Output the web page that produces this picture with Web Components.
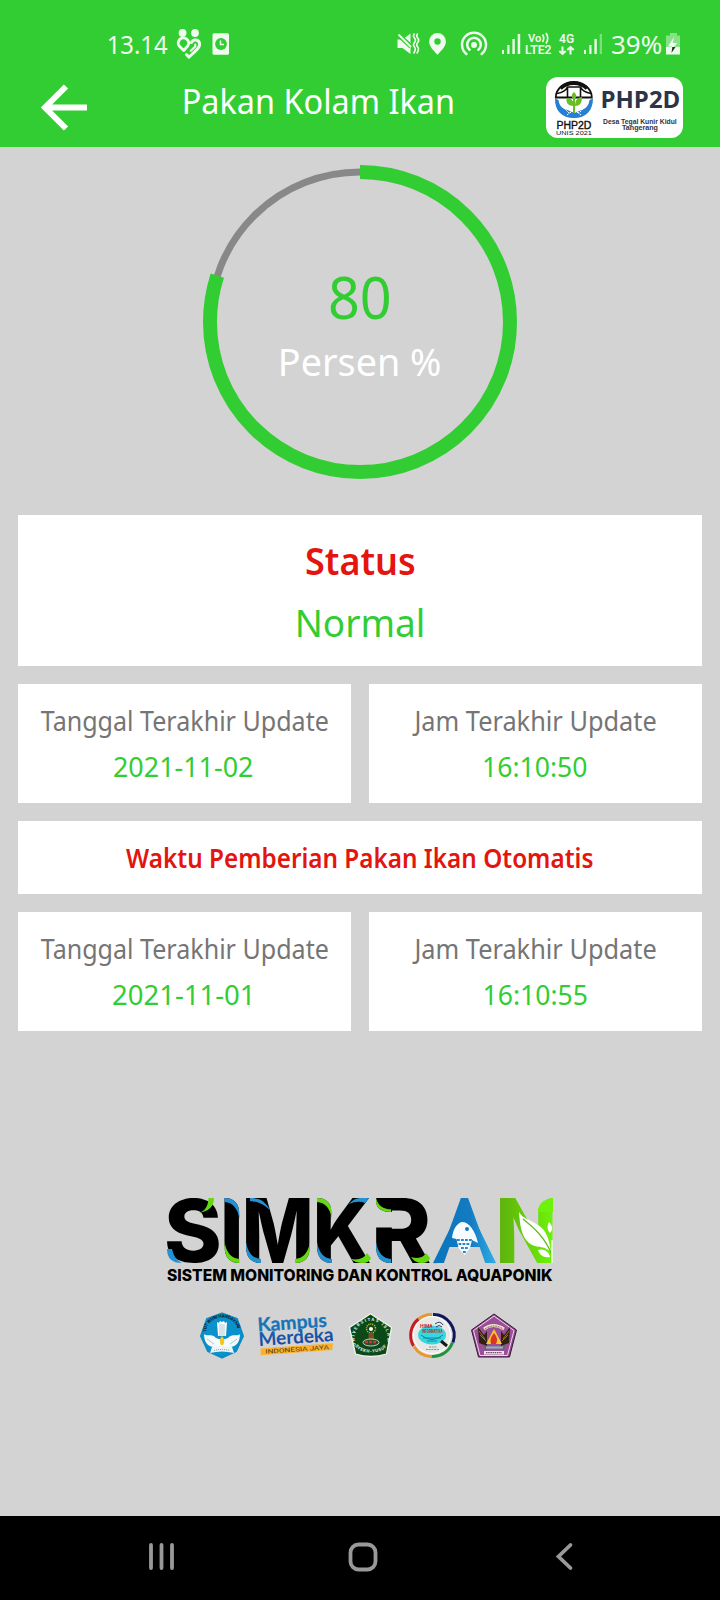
<!DOCTYPE html>
<html lang="id">
<head>
<meta charset="utf-8">
<title>Pakan Kolam Ikan</title>
<style>
html,body{margin:0;padding:0;background:#d3d3d3}
body{font-family:"Noto Sans","Open Sans",sans-serif;width:720px;height:1600px;overflow:hidden}
</style>
</head>
<body>
<phone-screen>
  <status-bar slot="top"></status-bar>
  <app-header slot="top"><fit-label size="35" line="44" ink="268">Pakan Kolam Ikan</fit-label></app-header>
  <percent-gauge value="80">
    <fit-label slot="value" size="57.5" line="66" ink="60">80</fit-label>
    <fit-label slot="unit" size="38" line="52" ink="159" tone="white">Persen %</fit-label>
  </percent-gauge>
  <info-grid>
    <info-card kind="status"><fit-label size="38" line="52" ink="109" tone="red" weight="600">Status</fit-label><fit-label size="38" line="52" ink="125" tone="green">Normal</fit-label></info-card>
    <info-card><fit-label size="27" line="36" ink="287" tone="grey">Tanggal Terakhir Update</fit-label><fit-label size="27" line="36" ink="139" tone="green" shift="-1">2021-11-02</fit-label></info-card>
    <info-card><fit-label size="27" line="36" ink="244" tone="grey" shift="-1.5">Jam Terakhir Update</fit-label><fit-label size="27" line="36" ink="103" tone="green">16:10:50</fit-label></info-card>
    <info-card kind="banner"><fit-label size="27" line="36" ink="467" tone="red" weight="600">Waktu Pemberian Pakan Ikan Otomatis</fit-label></info-card>
    <info-card><fit-label size="27" line="36" ink="287" tone="grey">Tanggal Terakhir Update</fit-label><fit-label size="27" line="36" ink="137" tone="green" shift="-3">2021-11-01</fit-label></info-card>
    <info-card><fit-label size="27" line="36" ink="244" tone="grey" shift="-1.5">Jam Terakhir Update</fit-label><fit-label size="27" line="36" ink="102" tone="green">16:10:55</fit-label></info-card>
  </info-grid>
  <brand-mark></brand-mark>
  <partner-logos></partner-logos>
  <nav-bar slot="bottom"></nav-bar>
</phone-screen>
<script>
const ctx = document.createElement('canvas').getContext('2d');
function inkOf(el, text){
  const s = getComputedStyle(el);
  ctx.font = `${s.fontWeight} ${s.fontSize} ${s.fontFamily}`;
  const m = ctx.measureText(text);
  return {left:-m.actualBoundingBoxLeft, right:m.actualBoundingBoxRight, width:m.width};
}
/* Stretches every <text data-fit="x0 x1" data-y="baseline"> so its ink spans x0..x1. */
function fitTexts(root){
  root.querySelectorAll('text[data-fit]').forEach(t => {
    const [a,b] = t.dataset.fit.split(' ').map(Number);
    const k = inkOf(t, t.textContent), s = (b-a)/(k.right-k.left);
    t.setAttribute('transform', `translate(${a-k.left*s} ${t.dataset.y}) scale(${s} ${t.dataset.sy||1})`);
  });
}
function define(name, html, ready){
  customElements.define(name, class extends HTMLElement{
    constructor(){ super(); this.attachShadow({mode:'open'}).innerHTML = html; }
    connectedCallback(){ if(ready) ready.call(this); fitTexts(this.shadowRoot); }
  });
}

define('phone-screen', `<style>
:host{display:flex;flex-direction:column;width:720px;height:1600px;background:#d3d3d3}
header{height:147px;background:#32cd32;display:flex;flex-direction:column}
main{flex:1;display:flex;flex-direction:column;align-items:center}
</style><header><slot name="top"></slot></header><main><slot></slot></main><slot name="bottom"></slot>`);

define('fit-label', `<style>
:host{display:block;white-space:nowrap;text-align:center;color:#fff}
:host([tone=green]),:host([slot=value]){color:#32cd32}:host([tone=red]){color:#e4140f}:host([tone=grey]){color:#757575}
span{display:inline-block;transform-origin:0 50%}
</style><span><slot></slot></span>`, function(){
  const g = n => this.getAttribute(n);
  this.style.fontSize = g('size')+'px';
  this.style.lineHeight = g('line')+'px';
  this.style.fontWeight = g('weight') || '400';
  const k = inkOf(this, this.textContent), s = g('ink')/(k.right-k.left);
  const dx = k.width/2 - s*(k.left+k.right)/2 + Number(g('shift')||0);
  this.shadowRoot.querySelector('span').style.transform = `translateX(${dx}px) scaleX(${s})`;
});

define('status-bar', `<style>
:host{display:flex;justify-content:space-between;height:70px;padding:0 30px 0 100px;box-sizing:border-box}
svg{display:block}text{font-family:"Noto Sans",sans-serif;fill:#effbef}.r text{font-family:Roboto,sans-serif;font-weight:600}
</style>
<svg width="140" height="70" viewBox="100 0 140 70" fill="#effbef">
<text font-size="25.5" data-fit="108.5 168" data-y="54">13.14</text>
<circle cx="182.600" cy="33" r="3.900"/><circle cx="195" cy="33" r="3.900"/>
<g fill="none" stroke="#effbef" stroke-width="2.900" stroke-linecap="round" stroke-linejoin="round"><path d="M183.700 50.500l-4.300-4.200a5.200 5.200 0 1 1 8.400-.4z"/><path d="M191.300 42.600c1.800-3.800 8.200-3.600 8.400 1.800 0 3.200-3.700 6-10.700 12.700l-2.600-2.600"/><path d="M195.300 44.500v2l-4.500 4.300" stroke-width="2.200"/></g>
<rect x="212.500" y="33.300" width="16.500" height="21.500" rx="1.500"/><circle cx="221" cy="44" r="5.900" fill="#32cd32"/><path d="M220.500 40.500v4h3.500" fill="none" stroke="#effbef" stroke-width="1.500"/>
</svg>
<svg width="310" height="70" viewBox="380 0 310 70" fill="#effbef">
<path d="M397.500 39.500h5l8-6v20.500l-8-6h-5z"/><path d="M397 33.500l14 13" stroke="#32cd32" stroke-width="4.500"/><path d="M398.500 34.500l12.500 12.500" stroke="#effbef" stroke-width="2"/>
<path d="M414.500 33.500q-2 2.300 0 4.500t0 4.500q-2 2.300 0 4.500t-1 6.500M417.700 33.500q-2 2.300 0 4.500t0 4.500q-2 2.300 0 4.500t-1 6.500" fill="none" stroke="#effbef" stroke-width="1.600"/>
<path fill-rule="evenodd" d="M437.500 33a8.400 8.400 0 0 0-8.400 8.400c0 5 4.500 9 8.400 13.300 3.900-4.300 8.400-8.300 8.400-13.300a8.400 8.400 0 0 0-8.400-8.400zm0 5.300a3.200 3.200 0 1 1 0 6.400 3.200 3.200 0 0 1 0-6.400z"/>
<circle cx="474" cy="45" r="3"/><g fill="none" stroke="#effbef" stroke-width="2.500" stroke-linecap="round"><path d="M469.600 49.800a6.800 6.800 0 1 1 8.800 0M466.400 54a12 12 0 1 1 15.200 0"/></g>
<path d="M502 50h2v4h-2zM507.300 45h2.200v9h-2.200zM512.400 39h2.400v15h-2.400zM517.700 34h2.500v20h-2.500z"/>
<g class="r"><text font-size="11" data-fit="528 541" data-y="42">Vo</text><text font-size="12.300" data-fit="525 551.500" data-y="54">LTE2</text><text font-size="13.500" data-fit="559 574" data-y="43">4G</text></g>
<path d="M542.500 34.500q2.500 3.500 0 7.500M546 33q3.500 5 0 10.500" fill="none" stroke="#effbef" stroke-width="1.700"/>
<path d="M562.500 46.500v7M559.300 51l3.200 3 3.200-3M570.500 54.500v-7M567.300 50l3.200-3 3.200 3" fill="none" stroke="#effbef" stroke-width="2"/>
<path d="M584 50h2v4h-2zM589.300 45h2.200v9h-2.200zM594.400 39h2.400v15h-2.400z"/><path d="M599.700 34h2.300v20h-2.300z" opacity=".4"/>
<text font-size="25.500" data-fit="612 661" data-y="54">39%</text>
<path d="M670 33h7v2.500h3v11.500h-14V35.500h4z" opacity=".45"/><path d="M666 47h14v7.500h-14z"/><path d="M674 37l-6 9.500h4l-1.500 5 6.500-8.500h-4.200z"/><path d="M672.300 47h3.200l-4 6 .8-6z" fill="#123a12"/>
</svg>`);

define('app-header', `<style>
:host{display:flex;height:77px;padding:7px 37px 9px 40px;box-sizing:border-box;justify-content:space-between;align-items:flex-start}
svg{display:block;overflow:visible}.t{width:280px;padding:1.500px 0 0 0;margin-right:14px}
.arrow{margin-top:6px}text{font-family:"Open Sans",sans-serif}.s{font-family:"Liberation Sans",sans-serif;font-weight:700}
</style>
<svg class="arrow" width="50" height="50" viewBox="40 83 50 50" fill="none" stroke="#fff" stroke-width="6"><path d="M87 107.500H46M66 86.500L45 107.500l21 21"/></svg>
<div class="t"><slot></slot></div>
<svg width="137" height="61" viewBox="546 77 137 61"><rect x="546" y="77" width="137" height="61" rx="12" fill="#fff"/>
<path d="M555.800 97.500a18 15.500 0 0 1 36 0z" fill="#fff" stroke="#111" stroke-width="1.800"/><path d="M557 93.500c6-1 9-3 10.500-6.500h13c1.500 3.500 5 5.500 10.500 6.500M567.500 87v10M580.500 87v10" fill="none" stroke="#111" stroke-width="1.600"/><path d="M560.500 88.500a17.500 15 0 0 1 26.500 0" fill="none" stroke="#111" stroke-width="3.500"/>
<path d="M555 98.500c-.5 12 7 19.500 19 19.500s19-7.500 19-19.500l-3.500 1.500c-1 7-5 9-8 10l-7 3-7-3c-4-1-8-3-9-10z" fill="#257fd2"/><path d="M561 105l8 8 5-3 5 3 8-8M567 115l4-3M581 115l-4-3" stroke="#fff" stroke-width="1" stroke-dasharray="2 1" fill="none"/>
<path d="M574 113V96" stroke="#69bd26" stroke-width="2"/><path d="M574 106c-6 0-8-3-7.500-8 5 0 7.500 3 7.500 8zm1 0c0-6 3-9 7-9 0 6-2 9-7 9zm-1-6c-3-3-3-5 0-8 3 3 3 5 0 8z" fill="#69bd26"/>
<text class="s" font-size="11" style="font-weight:400" stroke="#111" stroke-width=".4" data-fit="556.500 591.500" data-y="128.500" fill="#111">PHP2D</text><text class="s" font-size="5.200" style="font-weight:400" data-fit="556 592" data-y="134.500" fill="#111">UNIS 2021</text>
<text font-size="23.500" font-weight="700" data-fit="602.500 680" data-y="107.500" fill="#2d3348">PHP2D</text>
<text class="s" font-size="6.800" data-fit="603 677" data-y="123.500" fill="#2d3348">Desa Tegal Kunir Kidul</text><text class="s" font-size="6.500" data-fit="622 658" data-y="130" fill="#2d3348">Tangerang</text>
</svg>`);

define('percent-gauge', `<style>
:host{display:grid;width:314px;height:314px;margin-top:18px}
svg,.c{grid-area:1/1}.c{display:flex;flex-direction:column;align-items:center;gap:5px;padding-top:99px}
</style><svg viewBox="-157 -157 314 314" fill="none"><circle r="150" stroke="#888" stroke-width="7"/><circle class="arc" r="150" pathLength="100" stroke="#32cd32" stroke-width="14" transform="rotate(-90)"/></svg>
<div class="c"><slot name="value"></slot><slot name="unit"></slot></div>`, function(){
  this.shadowRoot.querySelector('.arc').setAttribute('stroke-dasharray', this.getAttribute('value')+' 100');
});

define('info-grid', `<style>:host{display:grid;grid-template-columns:1fr 1fr;gap:18px;width:684px;margin-top:36px}</style><slot></slot>`);
define('info-card', `<style>
:host{display:flex;flex-direction:column;gap:10px;background:#fff;height:119px;padding-top:19px;box-sizing:border-box}
:host([kind]){grid-column:span 2}:host([kind=status]){height:151px;padding-top:19px}:host([kind=banner]){height:73px}
</style><slot></slot>`);

define('brand-mark', `<style>:host{display:block;margin-top:164px}svg{display:block;overflow:visible}
text{font-family:Inter,sans-serif}.w{font-size:89.400px;font-weight:800}.bg{fill:#d3d3d3}</style>
<svg width="394" height="92" viewBox="163 1195 394 92">
<defs><linearGradient id="a"><stop stop-color="#0875bd"/><stop offset=".6" stop-color="#137bc2"/><stop offset="1" stop-color="#31aee8"/></linearGradient>
<linearGradient id="n"><stop stop-color="#5eae0c"/><stop offset=".45" stop-color="#65cc0a"/><stop offset="1" stop-color="#70f80a"/></linearGradient>
<g id="c"><path class="bg" d="M0-1.500H16.500V17H15C15 6 10 0 0 0z"/><path d="M0 0C10 0 15 6 15 17v4C13 10 8 4.500 0 4z" fill="currentColor"/></g></defs>
<text class="w" data-fit="167 219" data-y="1262" data-sy=".965">S</text><text class="w" data-fit="224.500 239.500" data-y="1263">I</text><text class="w" data-fit="246 310" data-y="1263">M</text><text class="w" data-fit="317 370" data-y="1263">K</text><text class="w" data-fit="376 430" data-y="1263">R</text><text class="w" data-fit="437 492" data-y="1263" fill="url(#a)" style="font-weight:300">A</text><text class="w" data-fit="500 553" data-y="1263" fill="url(#n)">N</text>
<path class="bg" d="M374 1212h21v15.500h-21z"/>
<g color="#64d910" fill="#64d910"><use href="#c" transform="translate(239.500 1263) scale(-1)"/><use href="#c" transform="translate(295 1263) scale(1 -1)"/><use href="#c" transform="translate(317 1198)"/><use href="#c" transform="translate(391 1212) scale(-1 -.66)"/><path d="M198 1213q10-2 10.500-15h5.500q0 13-16 15z"/><path d="M351 1259q12 2 16-6l4 5q-2 5-8 5-8 0-12-4z"/><path d="M411 1257q11 3 15-4l4 5q-1 5-8 5-7 0-11-6z"/></g>
<g color="#2391d2" fill="#2391d2"><use href="#c" transform="translate(224.500 1198)"/><use href="#c" transform="translate(261 1263) scale(-1)"/><use href="#c" transform="translate(332 1263) scale(-1)"/><use href="#c" transform="translate(391 1263) scale(-1)"/><path d="M167 1249q0 14 15 14-8-4-10-14z"/><path d="M250 1198c10 0 15 3 20 12-6-5-10-8-20-9z"/><path d="M349 1204q5-6 11-6h9l-4 5q-7-3-16 1z"/></g>
<path d="M464.500 1199L496 1263q-8 1-10-4l-5-12h-33l-5 12q-2 5-10 4z" fill="url(#a)"/>
<path d="M452 1238c1-9 5-15 10-16 7 0 13 8 16 21l-6-3-2 8-5.500 7-6-7-2-9z" fill="#f6fbff"/><circle cx="467" cy="1229" r="2" fill="#1479bd"/><path d="M457 1240h15M458.500 1244h12M461 1248h7M463 1252h3" stroke="#2688c8" stroke-width="2" stroke-dasharray="2.800 1.200"/>
<path class="bg" d="M516 1197h22v1q-1 0-2 3v15z"/><path class="bg" d="M538 1197.500h15q-12 2-15 12z"/>
<path d="M538 1209q3-9 15-11v14h-15z" fill="#6df20a"/>
<path d="M519 1212c4 7 10 7 19 13 8 5 11 13 13 27-9-8-15-3-22-9-8-7-9-18-10-31zM549 1222c4 4 4 8 1 11-3-3-3-7-1-11zM538 1250c6-2 11 2 12 7-7 1-10-2-12-7z" fill="#fff"/><path d="M523 1219c10 8 22 18 29 36" fill="none" stroke="#5dbc18" stroke-width="1.200"/><path d="M552 1240v23" stroke="#fff" stroke-width="1.400"/>
<text font-size="15.800" font-weight="800" data-fit="167 553" data-y="1281">SISTEM MONITORING DAN KONTROL AQUAPONIK</text>
</svg>`);

define('partner-logos', `<style>
:host{display:flex;width:318px;margin:25px 2px 0 0;align-items:flex-start}
svg{display:block;overflow:visible}text{font-family:Roboto,sans-serif;font-weight:700}.k{font-family:Lato,sans-serif;font-weight:700}
</style>
<svg width="44" height="47" viewBox="200 1312 44 47"><path d="M222 1313.500l15 5.500 6 17-7 15-14 6.500-14-6.500-7-15 6-17z" fill="#0b91cc" stroke="#0b8bc2" stroke-width="2" stroke-linejoin="round"/><defs><path id="p" d="M206 1332a16 14.500 0 0 1 32 0"/></defs><text font-size="4.600" fill="#0b2230"><textPath href="#p" textLength="44">TUT WURI HANDAYANI</textPath></text>
<path d="M217 1322l2 1 1-2 2 1 2-1 1 2 2-1-1 14h-8z" fill="#fff"/><path d="M204 1334c3 3 8-1 12 4l6 2 6-2c4-5 9-1 12-4 0 8-4 13-10 13l3 5-11-2-11 2 3-5c-6 0-10-5-10-13z" fill="#f5fafc"/><path d="M220 1324v12M222 1324v12M224 1324v12M207 1339l7 5M237 1339l-7 5M215 1350h14" stroke="#7aa4b8" stroke-width=".6"/><path d="M222 1336q4 4 1 9h-2q-3-5 1-9z" fill="#f4c61e"/><path d="M212 1347q10-2 20 0l2 6q-12-3-24 0z" fill="#eef4f6"/><path d="M214 1350.500q8-2 16 0" stroke="#387" stroke-width=".8" stroke-dasharray="1 1" fill="none"/></svg>
<svg width="78" height="44" viewBox="256 1312 78 44" style="margin-left:12px"><defs><linearGradient id="k" x1="0" x2="0" y1="0" y2="1"><stop stop-color="#1670ba"/><stop offset="1" stop-color="#1b3a98"/></linearGradient></defs>
<g transform="rotate(-4 259 1332)"><text class="k" font-size="19" data-fit="259 327" data-y="1331.500" fill="#1873b9" stroke="#1873b9" stroke-width=".3">Kampus</text><text class="k" font-size="19" data-fit="259 332.500" data-y="1346" fill="url(#k)">Merdeka</text><path d="M259.500 1348.500h72.500l-1 6.700h-72z" fill="#fbb12b"/><text font-size="5.800" style="font-weight:400" data-fit="264 328" data-y="1354" fill="#493817">INDONESIA JAYA</text></g></svg>
<svg width="44" height="47" viewBox="349 1312 44 47" style="margin-left:15px"><path d="M370.500 1313.700l21 13.800-5 26.500q-15.500 5-31 0l-6-26.500z" fill="#0b4a16" stroke="#f0f6ed" stroke-width="1.300" stroke-linejoin="round"/><defs><path id="u" d="M356 1345a16.500 17 0 1 1 30 0"/><path id="v" d="M355 1346a17 10 0 0 0 32 0"/></defs><text font-size="4.300" fill="#e9f5e9"><textPath href="#u" textLength="63">UNIVERSITAS ISLAM</textPath></text><text font-size="4.300" fill="#e9f5e9"><textPath href="#v" textLength="35">SYEKH-YUSUF</textPath></text><circle cx="371" cy="1328.500" r="4.500" fill="none" stroke="#d2be48" stroke-width="1.500" stroke-dasharray="1 1"/><circle cx="371" cy="1329" r="2" fill="#fff"/><path d="M368.500 1333h5.500v7h-5.500z" fill="#7b4d22"/><ellipse cx="371" cy="1342.500" rx="8" ry="3.500" fill="#294b27" stroke="#e7eee4" stroke-width=".8"/><path d="M365 1342h12" stroke="#d33427" stroke-width="2.500" stroke-dasharray="3 1"/></svg>
<svg width="45" height="47" viewBox="409 1312 45 47" style="margin-left:17px"><circle cx="431" cy="1335.500" r="20" fill="#e8e8e6"/><g fill="none" stroke-width="3"><path d="M412.500 1346a21 21 0 0 1 5-27" stroke="#c91a20"/><path d="M417.500 1319a21 21 0 0 1 13.500-4.600" stroke="#e69831"/><path d="M432 1314.400a21 21 0 0 1 20 28" stroke="#11165d"/><path d="M451.500 1342.500a21 21 0 0 1-21 14" stroke="#21933b"/><path d="M430 1356.500a21 21 0 0 1-17-10" stroke="#e69831"/></g><circle cx="431" cy="1335" r="18.500" fill="none" stroke="#fff"/><ellipse cx="431" cy="1335" rx="14" ry="9.500" fill="#35d8df"/><path d="M420 1335q11 9 22 0M426 1341h10M422 1338h18" stroke="#118ba5" fill="none"/><text font-size="5.500" fill="#bd2c26" data-fit="419 432" data-y="1327.500">HIMA</text><text font-size="5" fill="#bd2c26" data-fit="421 442" data-y="1332.500">INFORMATIKA</text><path d="M434 1324q5-4 8 1M435 1327q3-3 6 0" stroke="#233f69" fill="none"/><path d="M440 1341l6 5" stroke="#171717" stroke-width="3"/><path d="M428 1347h8M425 1349.500h13" stroke="#777" stroke-width=".8" stroke-dasharray="2 .7"/></svg>
<svg width="48" height="47" viewBox="471 1311 48 47" style="margin-left:16px"><path d="M494 1313l22.500 16-7 27h-31l-7-27z" fill="#8c4488" stroke="#3b173d" stroke-width="1"/><path d="M494 1315l20 14.500-6.500 25h-27.500l-6.500-25z" fill="#9a4f97" stroke="#f1d6ef" stroke-width="1"/><path d="M484 1328q9-7 20 0" fill="none" stroke="#efe4c7" stroke-width="3"/><path d="M485 1328q9-6 18 0" fill="none" stroke="#62424e" stroke-width="1" stroke-dasharray="1 .7"/><path d="M478 1326l6 8 3-4v15l-8-3zM510 1326l-6 8-3-4v15l8-3z" fill="#302012"/><path d="M479 1330l6 8M480 1334l6 6M509 1330l-6 8M508 1334l-6 6" stroke="#b88729" stroke-width=".8"/><path d="M484 1343a10 10 0 0 0 21 0l-3 7h-15z" fill="#267c55"/><path d="M494 1328l8 15h-16z" fill="#f4c831"/><path d="M494 1332q5 6 2 11h-5q-2-5 3-11z" fill="#dc3623"/><path d="M486 1345.500h17v2h-17z" fill="#76c6a7"/><path d="M484 1350h20v3.500h-20z" fill="#efe6ed"/><path d="M486 1351.700h16" stroke="#654564" stroke-width="1.200" stroke-dasharray="1.500 .7"/></svg>`);

define('nav-bar', `<style>:host{display:flex;height:84px;background:#000;padding:26px 146px 0 148px;box-sizing:border-box;justify-content:space-between}
svg{display:block}g{fill:none;stroke:#999;stroke-width:3.800;stroke-linecap:round}.h{margin-right:5px}</style>
<svg width="28" height="30" viewBox="148 1542 28 30"><g><path d="M151 1545v23M161.500 1545v23M172 1545v23"/></g></svg>
<svg class="h" width="30" height="30" viewBox="347.500 1541.500 30 30"><g><rect x="350" y="1544" width="25" height="25" rx="8"/></g></svg>
<svg width="20" height="30" viewBox="554 1542 20 30"><g><path d="M570.500 1545l-12 11.500 12 11.500"/></g></svg>`);
</script>
</body>
</html>
